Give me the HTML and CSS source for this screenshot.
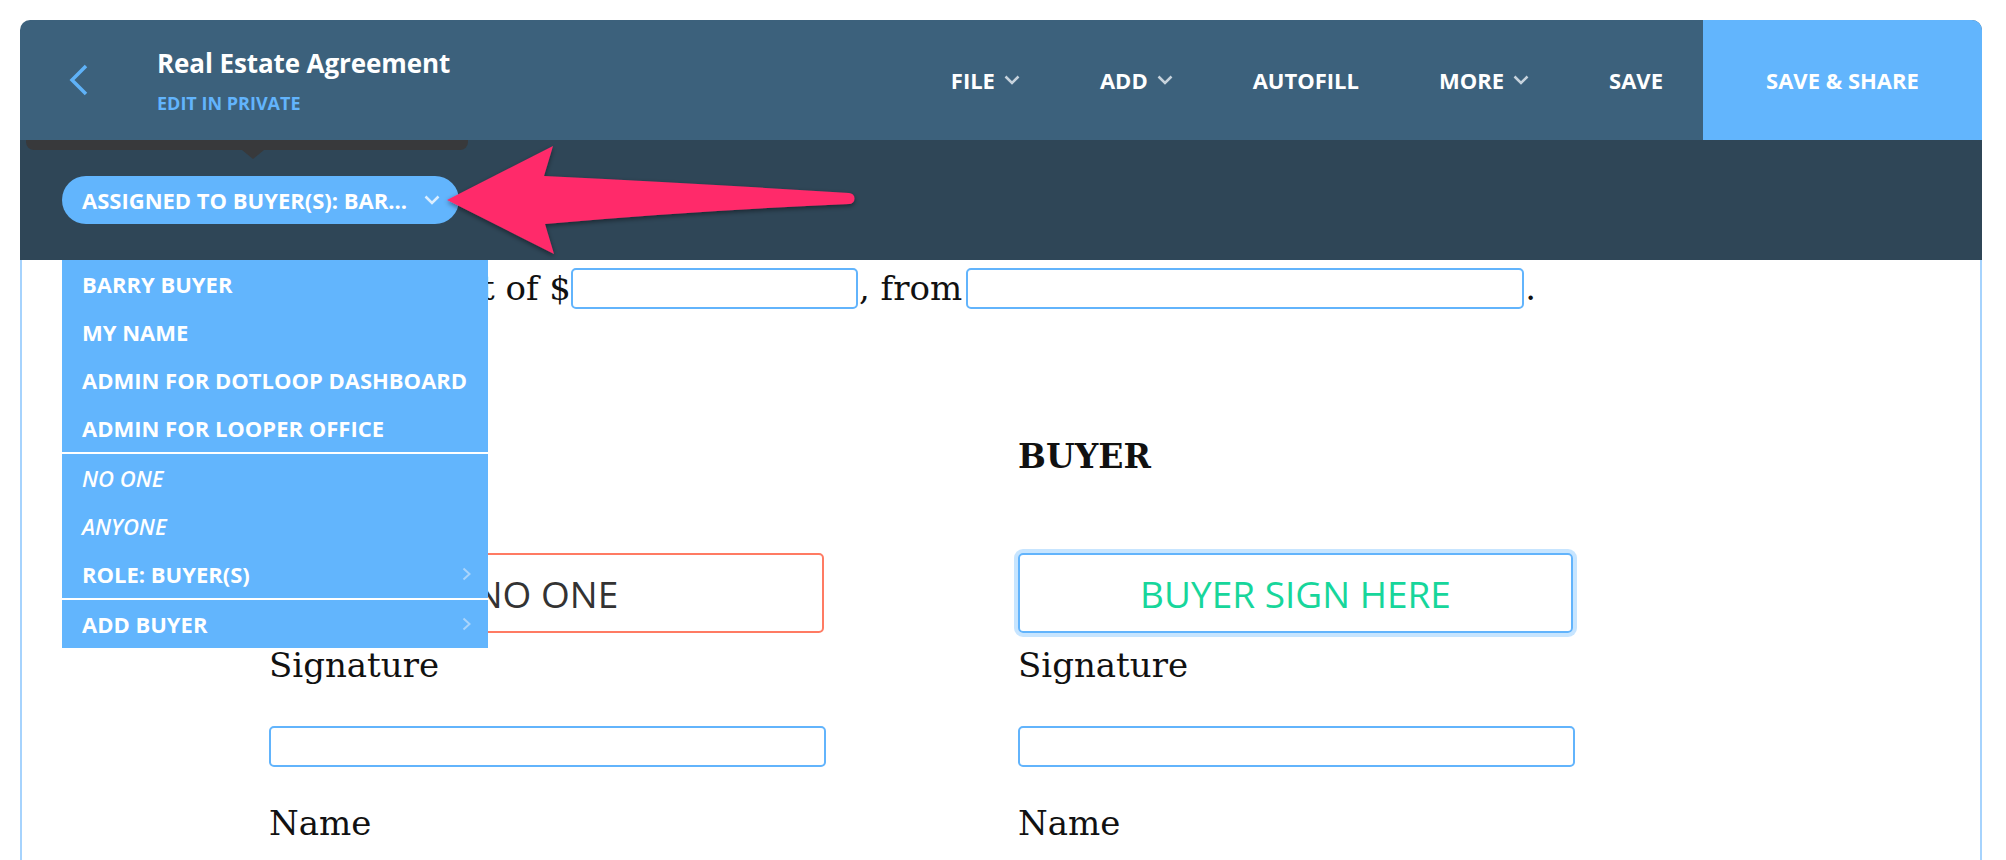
FILE: index.html
```html
<!DOCTYPE html>
<html lang="en">
<head>
<meta charset="utf-8">
<title>Real Estate Agreement</title>
<link rel="stylesheet" href="styles.css">
</head>
<body>
<div class="app">
  <header class="topbar">
    <div class="back">
      <svg class="back-icon" width="20" height="32" viewBox="0 0 20 32"><path d="M17 2 L3 16 L17 30"/></svg>
    </div>
    <div class="title-block">
      <div class="doc-title">Real Estate Agreement</div>
      <div class="doc-sub">EDIT IN PRIVATE</div>
    </div>
    <nav class="nav">
      <span class="nav-item">FILE<svg class="nav-chev" width="16" height="10" viewBox="0 0 16 10"><path d="M1.5 1.5 L8 8 L14.5 1.5"/></svg></span>
      <span class="nav-item">ADD<svg class="nav-chev" width="16" height="10" viewBox="0 0 16 10"><path d="M1.5 1.5 L8 8 L14.5 1.5"/></svg></span>
      <span class="nav-item">AUTOFILL</span>
      <span class="nav-item">MORE<svg class="nav-chev" width="16" height="10" viewBox="0 0 16 10"><path d="M1.5 1.5 L8 8 L14.5 1.5"/></svg></span>
      <span class="nav-item">SAVE</span>
    </nav>
    <div class="save-share">SAVE &amp; SHARE</div>
  </header>

  <div class="toolbar">
    <div class="assign-pill">
      <span>ASSIGNED TO BUYER(S): BAR...</span>
      <svg class="pill-chev" width="16" height="10" viewBox="0 0 16 10"><path d="M1.5 1.5 L8 8 L14.5 1.5"/></svg>
    </div>
  </div>

  <main class="doc">
    <div class="line">
      <span class="lead">the amount of $</span>
      <span class="field field-price"></span>
      <span class="txt">, from</span>
      <span class="field field-from"></span>
      <span class="txt">.</span>
    </div>
    <div class="sig-grid">
      <div class="sig-col">
        <div class="sig-head">&nbsp;</div>
        <div class="sig-box sig-none">NO ONE</div>
        <div class="sig-label">Signature</div>
        <div class="field field-name"></div>
        <div class="sig-label name-label">Name</div>
      </div>
      <div class="sig-col">
        <div class="sig-head">BUYER</div>
        <div class="sig-box sig-buyer">BUYER SIGN HERE</div>
        <div class="sig-label">Signature</div>
        <div class="field field-name"></div>
        <div class="sig-label name-label">Name</div>
      </div>
    </div>
  </main>

  <div class="tooltip-tail"></div>

  <svg class="callout-arrow" width="430" height="130" viewBox="0 0 430 130">
    <defs>
      <filter id="arrowShadow" x="-10%" y="-20%" width="120%" height="140%">
        <feDropShadow dx="0" dy="2" stdDeviation="2.5" flood-color="#000" flood-opacity="0.45"/>
      </filter>
    </defs>
    <path d="M7 60 L113 6 L104 36 Q250 43 409 53 A5.5 5.5 0 0 1 409 64 Q250 71 105 84 L114 114 Z" fill="#ff2b6b" filter="url(#arrowShadow)"/>
  </svg>

  <ul class="assign-menu">
    <li class="menu-item">BARRY BUYER</li>
    <li class="menu-item">MY NAME</li>
    <li class="menu-item">ADMIN FOR DOTLOOP DASHBOARD</li>
    <li class="menu-item group-end">ADMIN FOR LOOPER OFFICE</li>
    <li class="menu-item italic">NO ONE</li>
    <li class="menu-item italic">ANYONE</li>
    <li class="menu-item group-end">ROLE: BUYER(S)<svg class="menu-chev" width="9" height="14" viewBox="0 0 9 14"><path d="M1.5 1.5 L7.5 7 L1.5 12.5"/></svg></li>
    <li class="menu-item">ADD BUYER<svg class="menu-chev" width="9" height="14" viewBox="0 0 9 14"><path d="M1.5 1.5 L7.5 7 L1.5 12.5"/></svg></li>
  </ul>
</div>
</body>
</html>
```

FILE: styles.css
```css
* { box-sizing: border-box; }

html, body {
  margin: 0;
  padding: 0;
  background: #ffffff;
  overflow: hidden;
}

body {
  font-family: "Open Sans", "Liberation Sans", sans-serif;
}

.app {
  position: relative;
  margin: 20px 24px 0 20px;
  width: 1962px;
}

/* ---------- top bar ---------- */
.topbar {
  height: 120px;
  background: #3c617c;
  border-radius: 10px 10px 0 0;
  display: flex;
  align-items: center;
  overflow: hidden;
  color: #ffffff;
}

.back {
  width: 137px;
  padding-left: 49px;
  display: flex;
  align-items: center;
}

.back-icon path {
  fill: none;
  stroke: #5fb2f8;
  stroke-width: 3.5;
}

.title-block {
  display: flex;
  flex-direction: column;
}

.doc-title {
  font-size: 26px;
  font-weight: 700;
  line-height: 34px;
  letter-spacing: -0.1px;
}

.doc-sub {
  margin-top: 11px;
  font-size: 18px;
  font-weight: 700;
  line-height: 24px;
  color: #62b4fc;
}

.nav {
  margin-left: auto;
  display: flex;
  align-items: center;
  height: 100%;
}

.nav-item {
  display: flex;
  align-items: center;
  padding: 0 40px;
  font-size: 22px;
  font-weight: 700;
}

.nav-chev {
  margin-left: 9px;
}

.nav-chev path,
.pill-chev path {
  fill: none;
  stroke: #c6d2dc;
  stroke-width: 2.5;
}

.pill-chev path {
  stroke: #dbeeff;
}

.save-share {
  width: 279px;
  height: 100%;
  background: #62b5fd;
  display: flex;
  align-items: center;
  justify-content: center;
  font-size: 22px;
  font-weight: 700;
}

/* ---------- role toolbar ---------- */
.toolbar {
  height: 120px;
  background: #2f4657;
  padding: 36px 0 0 42px;
}

.assign-pill {
  display: inline-flex;
  align-items: center;
  height: 48px;
  padding: 0 19px 0 20px;
  border-radius: 24px;
  background: #62b5fd;
  color: #ffffff;
  font-size: 22px;
  font-weight: 700;
}

.pill-chev {
  margin-left: 17px;
}

/* ---------- document ---------- */
.doc {
  height: 600px;
  background: #ffffff;
  border-left: 2px solid #a6d3fd;
  border-right: 2px solid #a6d3fd;
  padding: 8px 0 0 247px;
  font-family: "DejaVu Serif", "Liberation Serif", serif;
  font-size: 34px;
  color: #111111;
}

.line {
  display: flex;
  align-items: center;
  height: 41px;
  line-height: 41px;
  white-space: nowrap;
}

.lead {
  display: inline-block;
  width: 302px;
  text-align: right;
  overflow: hidden;
}

.txt {
  padding: 0 0 0 1px;
}

.field {
  display: block;
  height: 41px;
  border: 2px solid #62b4fc;
  border-radius: 5px;
  background: #ffffff;
}

.field-price { width: 287px; }
.field-from { width: 558px; margin-left: 4px; }

.sig-grid {
  margin-top: 128px;
  display: grid;
  grid-template-columns: 557px 557px;
  column-gap: 192px;
}

.sig-col {
  display: flex;
  flex-direction: column;
  align-items: flex-start;
}

.sig-head {
  height: 40px;
  line-height: 40px;
  font-weight: 700;
  font-size: 33px;
}

.sig-box {
  margin-top: 76px;
  width: 555px;
  height: 80px;
  border-radius: 5px;
  display: flex;
  align-items: center;
  justify-content: center;
  font-family: "Open Sans", "Liberation Sans", sans-serif;
  font-size: 37px;
  font-weight: 400;
}

.sig-none {
  border: 2px solid #ff7b63;
  color: #333333;
}

.sig-buyer {
  border: 2px solid #62b4fc;
  box-shadow: 0 0 0 4px #c7e5ff;
  color: #17d69b;
}

.sig-label {
  margin-top: 12px;
  height: 40px;
  line-height: 40px;
}

.sig-col .field-name {
  margin-top: 41px;
  width: 557px;
}

.name-label {
  margin-top: 36px;
}

/* ---------- overlays ---------- */
.tooltip-tail {
  position: absolute;
  left: 6px;
  top: 120px;
  width: 442px;
  height: 10px;
  background: #38393b;
  border-radius: 0 0 8px 8px;
}

.tooltip-tail::after {
  content: "";
  position: absolute;
  left: 216px;
  top: 10px;
  border-left: 11px solid transparent;
  border-right: 11px solid transparent;
  border-top: 9px solid #38393b;
}

.callout-arrow {
  position: absolute;
  left: 420px;
  top: 120px;
}

.assign-menu {
  position: absolute;
  left: 42px;
  top: 240px;
  width: 426px;
  margin: 0;
  padding: 0;
  list-style: none;
  background: #62b5fd;
  color: #ffffff;
  font-size: 22px;
  font-weight: 700;
}

.menu-item {
  height: 48px;
  display: flex;
  align-items: center;
  justify-content: space-between;
  padding: 0 17px 0 20px;
}

.menu-item.italic {
  font-style: italic;
  font-weight: 600;
}

.menu-item.group-end {
  height: 50px;
  border-bottom: 2px solid #ffffff;
}

.menu-chev path {
  fill: none;
  stroke: #a9d4fb;
  stroke-width: 2;
}
```
